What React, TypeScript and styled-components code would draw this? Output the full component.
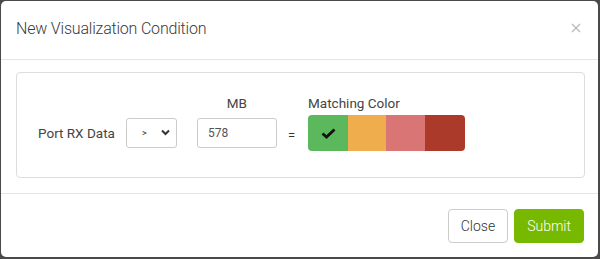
import React from "react";
import styled, { createGlobalStyle } from "styled-components";

const GlobalStyle = createGlobalStyle`
  html, body {
    margin: 0;
    padding: 0;
    background: #4a4a4a;
    font-family: Roboto, "Liberation Sans", sans-serif;
  }
  * { box-sizing: border-box; }
`;

const Modal = styled.div`
  margin: 1px 2px 2px 1px;
  width: 597px;
  height: 256px;
  background: #ffffff;
  border-radius: 5px;
  display: flex;
  flex-direction: column;
`;

const Header = styled.div`
  height: 59px;
  border-bottom: 1px solid #e5e5e5;
  display: flex;
  align-items: center;
  justify-content: space-between;
  padding: 0 16px 4px 15px;
`;

const Title = styled.h4`
  margin: 0;
  font-size: 16px;
  font-weight: 300;
  color: #3a3a3a;
  letter-spacing: -0.2px;
`;

const CloseX = styled.button`
  border: 0;
  background: none;
  padding: 0;
  width: 10px;
  height: 10px;
  margin-right: 1px;
  display: flex;
  cursor: pointer;
`;

const Body = styled.div`
  flex: 1;
  padding: 12px 13px 15px 15px;
`;

const Card = styled.div`
  border: 1px solid #dddddd;
  border-radius: 4px;
  height: 106px;
  padding: 0 22px 26px 21px;
  display: flex;
  align-items: flex-end;
`;

const Field = styled.div<{ $ml?: number }>`
  display: flex;
  flex-direction: column;
  align-items: center;
  margin-left: ${(p) => p.$ml ?? 0}px;
`;

const Label = styled.div<{ $left?: boolean }>`
  height: 18px;
  line-height: 18px;
  font-size: 13.5px;
  font-weight: 400;
  color: #444;
  margin-bottom: 3px;
  white-space: nowrap;
  align-self: ${(p) => (p.$left ? "flex-start" : "center")};
`;

const Slot = styled.div`
  height: 36px;
  display: flex;
  align-items: center;
`;

const RowText = styled.span`
  font-size: 13.5px;
  font-weight: 400;
  color: #444;
  white-space: nowrap;
`;

const SelectWrap = styled.div`
  position: relative;
  width: 51px;
  height: 30px;
  margin-left: 11px;
`;

const Select = styled.select`
  appearance: none;
  width: 100%;
  height: 100%;
  border: 1px solid #cccccc;
  border-radius: 3px;
  background: #fff;
  padding: 0 0 0 15px;
  font-size: 9px;
  color: #333;
  font-family: inherit;
`;

const Chevron = styled.svg`
  position: absolute;
  right: 7px;
  top: 11px;
  pointer-events: none;
`;

const Input = styled.input`
  width: 80px;
  height: 30px;
  border: 1px solid #cccccc;
  border-radius: 3px;
  padding: 0 10px;
  font-size: 12px;
  color: #555;
  font-family: inherit;
`;

const Equals = styled.span`
  font-size: 13px;
  color: #333;
  margin: 4px 13px 0 11px;
`;

const Swatches = styled.div`
  display: flex;
  height: 36px;
  border-radius: 4px;
  overflow: hidden;
`;

const Swatch = styled.div<{ $c: string; $w: number }>`
  width: ${(p) => p.$w}px;
  background: ${(p) => p.$c};
  display: flex;
  align-items: center;
  justify-content: center;
`;

const Footer = styled.div`
  height: 64px;
  border-top: 1px solid #e5e5e5;
  display: flex;
  justify-content: flex-end;
  align-items: center;
  gap: 6px;
  padding: 0 14px 0 0;
`;

const Button = styled.button<{ $primary?: boolean }>`
  height: 34px;
  padding: 0 12px;
  border-radius: 4px;
  font-family: inherit;
  font-size: 14px;
  font-weight: 300;
  border: 1px solid ${(p) => (p.$primary ? "#76b900" : "#cccccc")};
  background: ${(p) => (p.$primary ? "#76b900" : "#ffffff")};
  color: ${(p) => (p.$primary ? "#ffffff" : "#333333")};
`;

const colors = [
  { c: "#5cb85c", w: 40 },
  { c: "#f0ad4e", w: 38 },
  { c: "#d97575", w: 39 },
  { c: "#ab3a2a", w: 40 },
];

export default function App() {
  return (
    <>
      <GlobalStyle />
      <Modal>
        <Header>
          <Title>New Visualization Condition</Title>
          <CloseX aria-label="close">
            <svg width="10" height="10" viewBox="0 0 10 10">
              <path d="M1 1L9 9M9 1L1 9" stroke="#bbbbbb" strokeWidth="1.4" />
            </svg>
          </CloseX>
        </Header>
        <Body>
          <Card>
            <Field>
              <Slot>
                <RowText>Port RX Data</RowText>
                <SelectWrap>
                  <Select defaultValue=">">
                    <option value=">">&gt;</option>
                    <option value="<">&lt;</option>
                    <option value="=">=</option>
                  </Select>
                  <Chevron width="9" height="7" viewBox="0 0 9 7">
                    <path d="M1 1.5L4.5 5L8 1.5" fill="none" stroke="#333" strokeWidth="2" />
                  </Chevron>
                </SelectWrap>
              </Slot>
            </Field>
            <Field $ml={20}>
              <Label>MB</Label>
              <Slot>
                <Input defaultValue="578" />
              </Slot>
            </Field>
            <Slot>
              <Equals>=</Equals>
            </Slot>
            <Field>
              <Label $left>Matching Color</Label>
              <Slot>
                <Swatches>
                  {colors.map((s, i) => (
                    <Swatch key={s.c} $c={s.c} $w={s.w}>
                      {i === 0 && (
                        <svg width="15" height="11" viewBox="0 0 15 11">
                          <path d="M1.5 5.5L5.5 9L13.5 1.5" fill="none" stroke="#111" strokeWidth="2.8" />
                        </svg>
                      )}
                    </Swatch>
                  ))}
                </Swatches>
              </Slot>
            </Field>
          </Card>
        </Body>
        <Footer>
          <Button>Close</Button>
          <Button $primary>Submit</Button>
        </Footer>
      </Modal>
    </>
  );
}
